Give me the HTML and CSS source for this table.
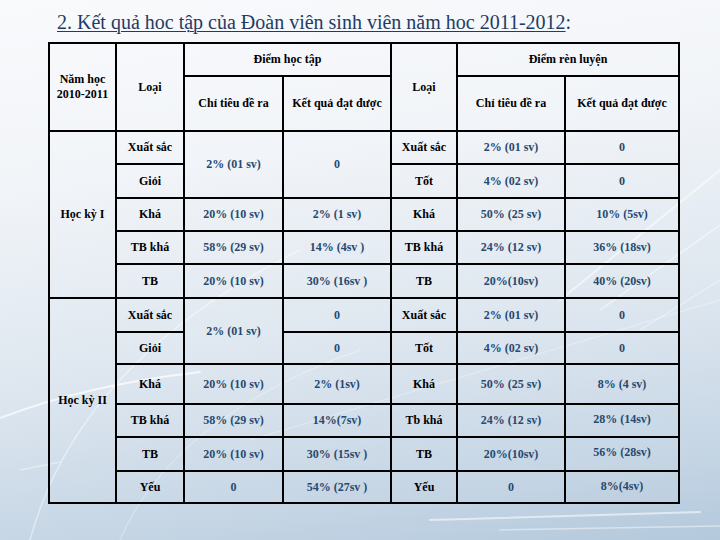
FILE: index.html
```html
<!DOCTYPE html>
<html lang="vi">
<head>
<meta charset="utf-8">
<title>Kết quả học tập</title>
<link rel="stylesheet" href="styles.css">
</head>
<body>
<svg class="streaks" width="720" height="540" viewBox="0 0 720 540" aria-hidden="true">
  <g fill="none" stroke="#ffffff" stroke-linecap="round">
    <path d="M0 418 C 60 395, 130 380, 200 372" stroke-width="2" opacity="0.7"/>
    <path d="M30 540 C 60 430, 140 330, 300 250" stroke-width="1.5" opacity="0.45"/>
    <path d="M120 540 C 150 470, 220 400, 360 350" stroke-width="1" opacity="0.4"/>
    <path d="M560 300 L 720 170" stroke-width="2" opacity="0.55"/>
    <path d="M600 310 L 720 225" stroke-width="1.5" opacity="0.5"/>
    <path d="M640 330 L 720 280" stroke-width="1" opacity="0.5"/>
    <path d="M250 440 L 720 300" stroke-width="1" opacity="0.35"/>
    <path d="M430 520 L 700 512" stroke-width="2" opacity="0.55"/>
    <path d="M500 530 L 720 526" stroke-width="1.5" opacity="0.45"/>
    <path d="M20 470 L 60 462" stroke-width="1.5" opacity="0.4"/>
  </g>
</svg>
<div class="page">
  <h1 class="title"><span class="ul">2. Kết quả hoc tập của Đoàn viên sinh viên năm hoc 2011-2012</span>:</h1>
  <table class="grid">
    <colgroup>
      <col class="c1"><col class="c2"><col class="c3"><col class="c4"><col class="c5"><col class="c6"><col class="c7">
    </colgroup>
    <thead>
      <tr class="h1">
        <th rowspan="2">Năm học<br>2010-2011</th>
        <th rowspan="2">Loại</th>
        <th colspan="2">Điểm học tập</th>
        <th rowspan="2">Loại</th>
        <th colspan="2">Điểm rèn luyện</th>
      </tr>
      <tr class="h2">
        <th>Chỉ tiêu đề ra</th>
        <th>Kết quả đạt được</th>
        <th>Chỉ tiêu đề ra</th>
        <th>Kết quả đạt được</th>
      </tr>
    </thead>
    <tbody>
      <tr class="r33">
        <th rowspan="5">Học kỳ I</th>
        <th>Xuất sắc</th>
        <td rowspan="2">2% (01 sv)</td>
        <td rowspan="2">0</td>
        <th>Xuất sắc</th>
        <td>2% (01 sv)</td>
        <td>0</td>
      </tr>
      <tr class="r34">
        <th>Giỏi</th>
        <th>Tốt</th>
        <td>4% (02 sv)</td>
        <td>0</td>
      </tr>
      <tr class="r33">
        <th>Khá</th>
        <td>20% (10 sv)</td>
        <td>2% (1 sv)</td>
        <th>Khá</th>
        <td>50% (25 sv)</td>
        <td>10% (5sv)</td>
      </tr>
      <tr class="r33">
        <th>TB khá</th>
        <td>58% (29 sv)</td>
        <td>14% (4sv )</td>
        <th>TB khá</th>
        <td>24% (12 sv)</td>
        <td>36% (18sv)</td>
      </tr>
      <tr class="r34">
        <th>TB</th>
        <td>20% (10 sv)</td>
        <td>30% (16sv )</td>
        <th>TB</th>
        <td>20%(10sv)</td>
        <td>40% (20sv)</td>
      </tr>
      <tr class="r34">
        <th rowspan="6">Học kỳ II</th>
        <th>Xuất sắc</th>
        <td rowspan="2">2% (01 sv)</td>
        <td>0</td>
        <th>Xuất sắc</th>
        <td>2% (01 sv)</td>
        <td>0</td>
      </tr>
      <tr class="r32">
        <th>Giỏi</th>
        <td>0</td>
        <th>Tốt</th>
        <td>4% (02 sv)</td>
        <td>0</td>
      </tr>
      <tr class="r40">
        <th>Khá</th>
        <td>20% (10 sv)</td>
        <td>2% (1sv)</td>
        <th>Khá</th>
        <td>50% (25 sv)</td>
        <td>8% (4 sv)</td>
      </tr>
      <tr class="r33">
        <th>TB khá</th>
        <td>58% (29 sv)</td>
        <td>14%(7sv)</td>
        <th>Tb khá</th>
        <td>24% (12 sv)</td>
        <td class="hi">28% (14sv)</td>
      </tr>
      <tr class="r34">
        <th>TB</th>
        <td>20% (10 sv)</td>
        <td>30% (15sv )</td>
        <th>TB</th>
        <td>20%(10sv)</td>
        <td class="hi">56% (28sv)</td>
      </tr>
      <tr class="r32">
        <th>Yếu</th>
        <td>0</td>
        <td>54% (27sv )</td>
        <th>Yếu</th>
        <td>0</td>
        <td class="hi">8%(4sv)</td>
      </tr>
    </tbody>
  </table>
</div>
</body>
</html>
```

FILE: styles.css
```css
html, body {
  margin: 0;
  padding: 0;
}
body {
  position: relative;
  width: 720px;
  height: 540px;
  overflow: hidden;
  background: linear-gradient(172deg, #f9fafc 0%, #f1f4f8 30%, #dde6ef 62%, #c6d6e5 85%, #b4c9dc 100%);
  font-family: "Liberation Serif", "Times New Roman", serif;
}
.streaks {
  position: absolute;
  left: 0;
  top: 0;
  z-index: 0;
}
.page {
  position: relative;
  z-index: 1;
  padding: 10px 0 0 48px;
}
.title {
  margin: 0 0 0 9px;
  font-size: 20px;
  line-height: 24px;
  font-weight: normal;
  color: #1f3b66;
}
.title .ul {
  text-decoration: underline;
  text-decoration-thickness: 1px;
  text-underline-offset: 2px;
}
.grid {
  margin-top: 8px;
  width: 630px;
  table-layout: fixed;
  border-collapse: collapse;
  font-size: 12px;
  font-weight: bold;
}
.c1 { width: 67px; }
.c2 { width: 68px; }
.c3 { width: 99px; }
.c4 { width: 108px; }
.c5 { width: 66px; }
.c6 { width: 108px; }
.c7 { width: 114px; }
.grid th,
.grid td {
  border: 2px solid #000;
  padding: 0;
  text-align: center;
  vertical-align: middle;
  line-height: 15px;
}
.grid th {
  color: #000;
}
.grid td {
  color: #27496f;
}
.h1 { height: 33px; }
.h2 { height: 55px; }
.r32 { height: 32px; }
.r33 { height: 33px; }
.r34 { height: 34px; }
.r40 { height: 40px; }
.grid td.hi {
  vertical-align: top;
  padding-top: 7px;
}
```
